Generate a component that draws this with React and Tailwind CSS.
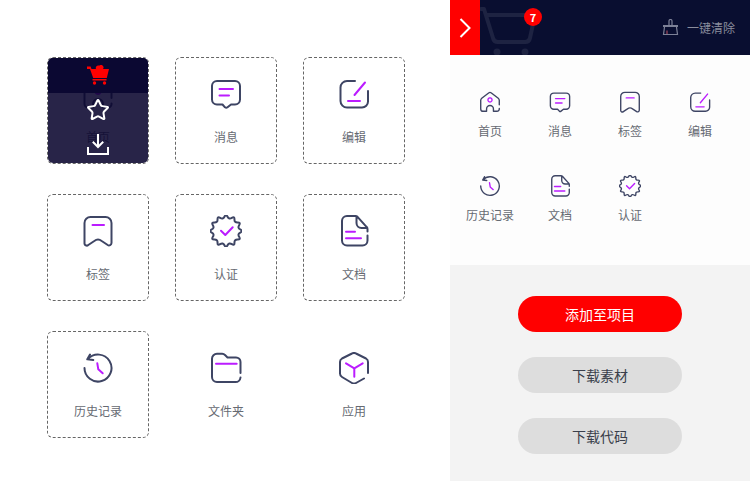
import { Star } from "lucide-react";

const DARK = "#3e4564";
const PURPLE = "#bb1cff";

// stroke pair: dark outline + purple accent, all drawn on a 32 box
const Glyph = ({ size, outline, accent }) => (
  <svg width={size} height={size} viewBox="0 0 32 32" fill="none" strokeWidth="2" strokeLinecap="round" strokeLinejoin="round">
    <path d={outline} stroke={DARK} />
    {accent && <path d={accent} stroke={PURPLE} />}
  </svg>
);

// wavy seal outline for the "认证" icon
const sealPath = () => {
  const n = 24;
  const pts = [];
  for (let i = 0; i < n; i++) {
    const a = (i / n) * Math.PI * 2 - Math.PI / 2;
    const r = i % 2 === 0 ? 17.2 : 11.8;
    pts.push([16 + r * Math.cos(a), 16 + r * Math.sin(a)]);
  }
  const mid = (p, q) => [(p[0] + q[0]) / 2, (p[1] + q[1]) / 2];
  const start = mid(pts[n - 1], pts[0]);
  let d = `M${start[0].toFixed(2)} ${start[1].toFixed(2)}`;
  pts.forEach((p, i) => {
    const m = mid(p, pts[(i + 1) % n]);
    d += `Q${p[0].toFixed(2)} ${p[1].toFixed(2)} ${m[0].toFixed(2)} ${m[1].toFixed(2)}`;
  });
  return d;
};

const icons = {
  home: {
    outline:
      "M11 29.500H6a3.500 3.500 0 0 1-3.500-3.500V13.500a4 4 0 0 1 1.500-3L14 2.800a3.200 3.200 0 0 1 4 0l10 7.700a4 4 0 0 1 1.500 3V20M29.500 25.500a3.500 3.500 0 0 1-3.500 4H21V26a5 5 0 0 0-10 0v3.500",
    accent: "M16 10a3 3 0 1 0 .01 0",
  },
  message: {
    outline:
      "M12.500 26.500H7a5 5 0 0 1-5-5V8a5 5 0 0 1 5-5h18a5 5 0 0 1 5 5v13.500a5 5 0 0 1-5 5h-4l-3.500 2.800a2 2 0 0 1-2.500 0z",
    accent: "M9.500 11H23M9.500 17.500H19",
  },
  tag: {
    outline:
      "M2.500 28V8a6 6 0 0 1 6-6h15a6 6 0 0 1 6 6v20a2.500 2.500 0 0 1-3.800 2l-6-4a6 6 0 0 0-7.400 0l-6 4a2.300 2.300 0 0 1-3.800-2z",
    accent: "M10.500 10H22",
  },
  edit: {
    outline: "M17 3H9a6.500 6.500 0 0 0-6.500 6.500V23A6.500 6.500 0 0 0 9 29.500h15a6 6 0 0 0 6-6V13",
    accent: "M16.500 17L27 4.500M10 23H22",
  },
  check: { outline: sealPath(), accent: "M11 15.700L15.300 20L22.700 12.300" },
  doc: {
    outline:
      "M29.500 20.500v5a5 5 0 0 1-5 5H9a5 5 0 0 1-5-5V6a5 5 0 0 1 5-5h8.500a3 3 0 0 1 2 .8l9 10a3 3 0 0 1 1 2.200v2.500M18.500 2v6a5 5 0 0 0 5 5H29",
    accent: "M8 16.700H17M8 23.300H23",
  },
  history: {
    outline: "M6 7A13.500 13.500 0 1 1 2.500 16M8 2.500L5.300 7.300L11.300 8",
    accent: "M15.300 11.300L16.300 17.300L20.700 21.300",
  },
  folder: {
    outline:
      "M30.500 21V10a4.500 4.500 0 0 0-4.500-4.500H17.500L15 3a4 4 0 0 0-2.800-1.200H7A5 5 0 0 0 2 6.800V25a5 5 0 0 0 5 5h18.500a5 5 0 0 0 5-4.500",
    accent: "M6 11.700H26.700",
  },
  app: {
    outline:
      "M26 26.500L18 31a4 4 0 0 1-4 0L4 25a4 4 0 0 1-2-3.500V10A4 4 0 0 1 4 6.500L14 1.500a4 4 0 0 1 4 0L28 6.500a4 4 0 0 1 2 3.500V21",
    accent: "M8 11.300L16.300 16.300L24.700 11.300M16.300 16.300V24.700",
  },
};

const Icon = ({ name, size = 32 }) => <Glyph size={size} {...icons[name]} />;

const CartSolid = () => (
  <svg width="22" height="20" viewBox="0 0 22 20" fill="#ff0000">
    <path d="M9 4a2.500 2.500 0 0 1 2.500-3.500h1A2.500 2.500 0 0 1 16 4z" />
    <path d="M0 1.500h3.600l.9 2.500H22l-2.200 9H6.200L3 4H0z" />
    <rect x="5.500" y="14" width="14" height="1.500" />
    <circle cx="7.500" cy="18" r="1.700" />
    <circle cx="17.500" cy="18" r="1.700" />
  </svg>
);

const Download = () => (
  <svg width="22" height="21" viewBox="0 0 22 21" fill="none" stroke="#fff" strokeWidth="2" strokeLinecap="square" strokeLinejoin="miter">
    <path d="M11 1v11M6.500 8.500L11 13l4.500-4.500" />
    <path d="M1 14v6h20v-6" />
  </svg>
);

const Broom = () => (
  <svg width="17" height="17" viewBox="0 0 17 17" fill="none" stroke="#7d8197" strokeWidth="1.200">
    <path d="M7 6.500V2a1.500 1.500 0 0 1 3 0v4.500" />
    <path d="M1 7H16" strokeWidth="2" />
    <path d="M2.500 8L1.500 15.500H15.500L14.500 8" />
    <path d="M5 15V11.500" stroke="#a3485c" />
  </svg>
);

const Card = ({ icon, label, dashed = true, children }) => (
  <div
    className={`relative flex flex-col items-center overflow-hidden rounded-[6px] border pt-5 ${
      dashed ? "border-dashed border-[#666666]" : "border-transparent"
    }`}
  >
    <Icon name={icon} />
    <span className="mt-[17px] text-xs leading-5 text-[#666a72]">{label}</span>
    {children}
  </div>
);

const Sidebar = ({ icon, label }) => (
  <div className="flex flex-col items-center">
    <Icon name={icon} size={22} />
    <span className="mt-2 text-xs leading-5 whitespace-nowrap text-[#666a72]">{label}</span>
  </div>
);

const PillButton = ({ label, primary }) => (
  <button
    className={`flex h-9 w-[164px] items-center justify-center rounded-full text-sm ${
      primary ? "bg-[#ff0000] text-white" : "bg-[#dddddd] text-[#3a3f4b]"
    }`}
  >
    {label}
  </button>
);

export default function App() {
  return (
    <div
      className="flex h-[481px] w-[750px] overflow-hidden bg-white"
      style={{ fontFamily: '"Noto Sans CJK SC", "Noto Sans", sans-serif' }}
    >
      {/* left: icon cards */}
      <div className="w-[450px] pl-[47px] pt-[57px]">
        <div className="grid grid-cols-[repeat(3,102px)] grid-rows-[repeat(3,107px)] gap-x-[26px] gap-y-[30px]">
          <Card icon="home" label="首页">
            <div className="absolute inset-0 flex flex-col items-center bg-[#0a062f]/88">
              <div className="flex h-[35px] w-full items-start justify-center bg-[#0b0832] pt-[7px]">
                <CartSolid />
              </div>
              <Star size={24} color="#fff" strokeWidth={2} className="mt-[5px]" />
              <div className="mt-[12px]">
                <Download />
              </div>
            </div>
          </Card>
          <Card icon="message" label="消息" />
          <Card icon="edit" label="编辑" />
          <Card icon="tag" label="标签" />
          <Card icon="check" label="认证" />
          <Card icon="doc" label="文档" />
          <Card icon="history" label="历史记录" />
          <Card icon="folder" label="文件夹" dashed={false} />
          <Card icon="app" label="应用" dashed={false} />
        </div>
      </div>

      {/* right: basket panel */}
      <div className="flex w-[300px] flex-col">
        <div className="flex h-[55px] shrink-0 items-start bg-[#090e30]">
          <div className="flex h-[55px] w-[30px] items-center justify-center bg-[#ff0000]">
            <svg width="12" height="20" viewBox="0 0 12 20" fill="none" stroke="#fff" strokeWidth="2">
              <path d="M1.500 1L10.500 10L1.500 19" />
            </svg>
          </div>
          <div className="relative h-[55px] w-[62px]">
            <svg width="62" height="55" viewBox="0 0 62 55" fill="none" stroke="#1e2342" strokeWidth="4" strokeLinecap="round" strokeLinejoin="round">
              <path d="M1 9H4L13 38a5 5 0 0 0 5 4H45a5 5 0 0 0 5-4L55 15H7" />
              <circle cx="17" cy="52" r="3.500" fill="#1e2342" stroke="none" />
              <circle cx="45" cy="52" r="3.500" fill="#1e2342" stroke="none" />
            </svg>
            <span className="absolute left-[44px] top-2 flex h-[18px] w-[18px] items-center justify-center rounded-full bg-[#ff0000] text-[11px] font-bold text-white">
              7
            </span>
          </div>
          <div className="ml-auto flex h-[55px] items-center gap-2 pr-[15px]">
            <Broom />
            <span className="text-xs text-[#8a8d9d]">一键清除</span>
          </div>
        </div>

        <div className="h-[210px] shrink-0 bg-[#fdfdfd] px-[5px] pt-9">
          <div className="grid grid-cols-[repeat(4,70px)] gap-y-[34px]">
            <Sidebar icon="home" label="首页" />
            <Sidebar icon="message" label="消息" />
            <Sidebar icon="tag" label="标签" />
            <Sidebar icon="edit" label="编辑" />
            <Sidebar icon="history" label="历史记录" />
            <Sidebar icon="doc" label="文档" />
            <Sidebar icon="check" label="认证" />
          </div>
        </div>

        <div className="flex flex-1 flex-col gap-[25px] bg-[#f3f3f3] pl-[68px] pt-[31px]">
          <PillButton label="添加至项目" primary />
          <PillButton label="下载素材" />
          <PillButton label="下载代码" />
        </div>
      </div>
    </div>
  );
}
